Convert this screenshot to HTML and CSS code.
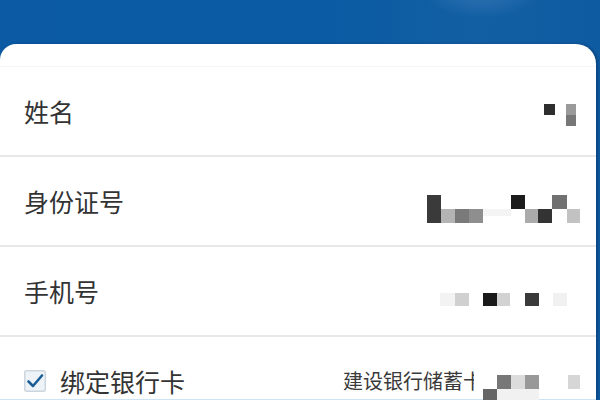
FILE: index.html
```html
<!DOCTYPE html>
<html lang="zh-CN">
<head>
<meta charset="utf-8">
<link rel="stylesheet" href="styles.css">
</head>
<body>
<div class="page">
  <div class="header"></div>
  <div class="card">
    <div class="row first">
      <span class="label">姓名</span>
      <svg class="mosaic" width="200" height="88" viewBox="0 0 200 88">
        <rect x="144" y="37" width="11" height="11" fill="#2e2e2e"/>
        <rect x="166" y="37" width="10" height="11" fill="#9a9a9a"/>
        <rect x="166" y="48" width="10" height="11" fill="#777"/>
      </svg>
    </div>
    <div class="row">
      <span class="label">身份证号</span>
      <svg class="mosaic" width="200" height="88" viewBox="0 0 200 88">
        <rect x="83" y="52" width="28" height="7" fill="#f4f4f4"/>
        <rect x="27" y="38" width="14" height="28" fill="#3a3a3a"/>
        <rect x="41" y="52" width="14" height="14" fill="#b4b4b4"/>
        <rect x="55" y="52" width="14" height="14" fill="#7a7a7a"/>
        <rect x="69" y="52" width="14" height="14" fill="#8e8e8e"/>
        <rect x="111" y="38" width="14" height="14" fill="#1c1c1c"/>
        <rect x="125" y="52" width="13" height="14" fill="#ababab"/>
        <rect x="138" y="52" width="14" height="14" fill="#333"/>
        <rect x="152" y="38" width="15" height="14" fill="#717171"/>
        <rect x="167" y="52" width="13" height="14" fill="#c2c2c2"/>
      </svg>
    </div>
    <div class="row">
      <span class="label">手机号</span>
      <svg class="mosaic" width="200" height="88" viewBox="0 0 200 88">
        <rect x="40" y="46" width="15" height="13" fill="#f3f3f3"/>
        <rect x="55" y="46" width="14" height="13" fill="#d0d0d0"/>
        <rect x="83" y="46" width="14" height="13" fill="#1a1a1a"/>
        <rect x="97" y="46" width="13" height="13" fill="#d2d2d2"/>
        <rect x="125" y="46" width="14" height="13" fill="#3a3a3a"/>
        <rect x="153" y="46" width="14" height="13" fill="#f1f1f1"/>
      </svg>
    </div>
    <div class="row">
      <span class="check">
        <svg width="22" height="22" viewBox="0 0 22 22">
          <rect x="0.75" y="0.75" width="20.5" height="20.5" rx="2" fill="#eef3f8" stroke="#cdd6de" stroke-width="1.5"/>
          <path d="M4.5 11.5 L9 16 L18 5.5" fill="none" stroke="#1c5f97" stroke-width="2.6" stroke-linecap="round" stroke-linejoin="round"/>
        </svg>
      </span>
      <span class="label">绑定银行卡</span>
      <span class="bank">建设银行储蓄卡</span>
      <svg class="mosaic tail" width="126" height="88" viewBox="0 0 126 88">
        <rect x="23" y="52" width="42" height="14" fill="#f1f1f1"/>
        <rect x="23" y="38" width="14" height="14" fill="#777"/>
        <rect x="37" y="38" width="14" height="14" fill="#dcdcdc"/>
        <rect x="51" y="38" width="14" height="14" fill="#999"/>
        <rect x="94" y="38" width="12" height="14" fill="#d6d6d6"/>
        <rect x="9" y="52" width="14" height="14" fill="#666"/>
      </svg>
    </div>
  </div>
</div>
</body>
</html>
```

FILE: styles.css
```css
html, body {
  margin: 0;
  padding: 0;
  background: #ffffff;
}

.page {
  width: 600px;
  height: 400px;
  overflow: hidden;
  background:
    radial-gradient(ellipse 62px 30px at 482px -12px, rgba(110, 160, 210, 0.35), rgba(110, 160, 210, 0) 100%),
    linear-gradient(90deg, #0b5aa3 0%, #0a5ba3 55%, #135fa3 80%, #0e5ba2 100%);
  font-family: "Noto Sans CJK SC", "Noto Sans", sans-serif;
}

.header {
  height: 44px;
}

.card {
  width: 596px;
  background: #ffffff;
  border-radius: 16px 20px 0 0;
  box-shadow: 0 -1px 0 rgba(200, 225, 245, 0.9) inset, 2px 0 3px rgba(0, 30, 70, 0.35);
  padding-top: 22px;
  height: 334px;
}

.row {
  height: 88px;
  display: flex;
  align-items: center;
  border-bottom: 2px solid #e8e8e8;
  padding-left: 24px;
}

.row.first {
  border-top: 1px solid #f5f5f5;
}

.label {
  font-size: 25px;
  color: #333333;
  line-height: 1;
}

.mosaic {
  margin-left: auto;
  margin-right: -4px;
  flex: none;
  display: block;
}

.check {
  display: flex;
  width: 22px;
  height: 22px;
  margin-right: 14px;
  flex: none;
}

.bank {
  margin-left: auto;
  width: 131px;
  font-size: 20px;
  line-height: 1.2;
  color: #3a3a3a;
  white-space: nowrap;
  overflow: hidden;
  flex: none;
}

.mosaic.tail {
  margin-left: 0;
}
```
